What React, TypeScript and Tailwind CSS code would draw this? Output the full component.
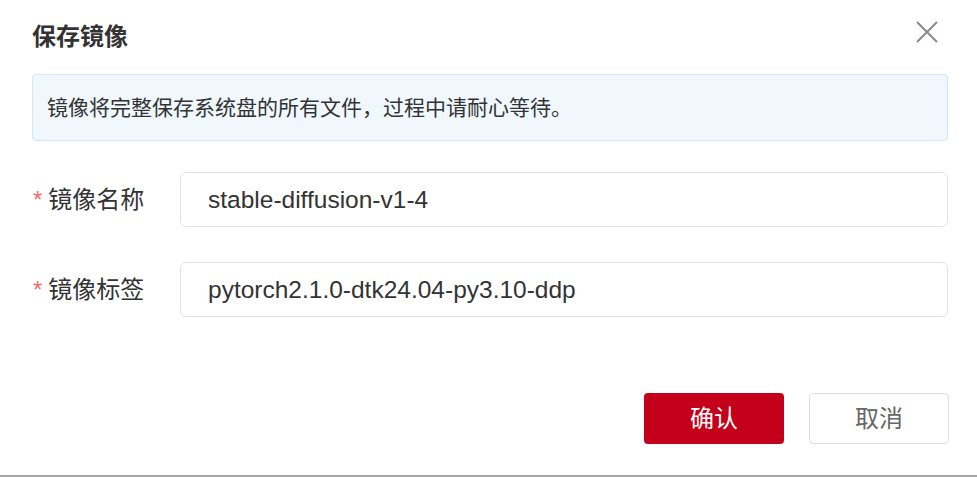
import React from 'react';

const fields = [
  { label: '镜像名称', value: 'stable-diffusion-v1-4' },
  { label: '镜像标签', value: 'pytorch2.1.0-dtk24.04-py3.10-ddp' },
];

export default function App() {
  return (
    <div className="w-[977px] h-[477px] bg-white border-b-2 border-[#a6a6a6] flex flex-col pl-[32px] pr-[29px] text-[#333] font-['Liberation_Sans','Noto_Sans_CJK_SC',sans-serif]">
      <div className="flex items-start justify-between pt-[21px] h-[74px]">
        <h2 className="text-[24px] leading-[32px] font-bold">保存镜像</h2>
        <button className="mr-[10px] text-[#8a8a8a]" aria-label="close">
          <svg width="22" height="22" viewBox="0 0 22 22" fill="none" stroke="currentColor" strokeWidth="2">
            <path d="M1 1L21 21M21 1L1 21" />
          </svg>
        </button>
      </div>

      <div className="h-[67px] flex items-center pl-[14px] bg-[#f0f8fe] border border-[#cfe7f8] rounded-[4px] text-[21px] text-[#333]">
        镜像将完整保存系统盘的所有文件，过程中请耐心等待。
      </div>

      <div className="mt-[31px] flex flex-col gap-[35px]">
        {fields.map((f) => (
          <div key={f.label} className="flex items-center">
            <label className="w-[148px] flex items-center text-[24px]">
              <span className="text-[#f56c6c] ml-[1px] mr-[6px]">*</span>
              <span>{f.label}</span>
            </label>
            <input
              readOnly
              value={f.value}
              className="flex-1 h-[55px] border border-[#e3e3e3] rounded-[6px] pl-[27px] text-[24.5px] text-[#333] outline-none"
            />
          </div>
        ))}
      </div>

      <div className="mt-auto mb-[31px] flex justify-end gap-[25px]">
        <button className="w-[140px] h-[51px] rounded-[4px] bg-[#c4001b] text-white text-[24px]">确认</button>
        <button className="w-[140px] h-[51px] rounded-[4px] bg-white border border-[#dedede] text-[#666] text-[24px] -mr-[1px]">取消</button>
      </div>
    </div>
  );
}
